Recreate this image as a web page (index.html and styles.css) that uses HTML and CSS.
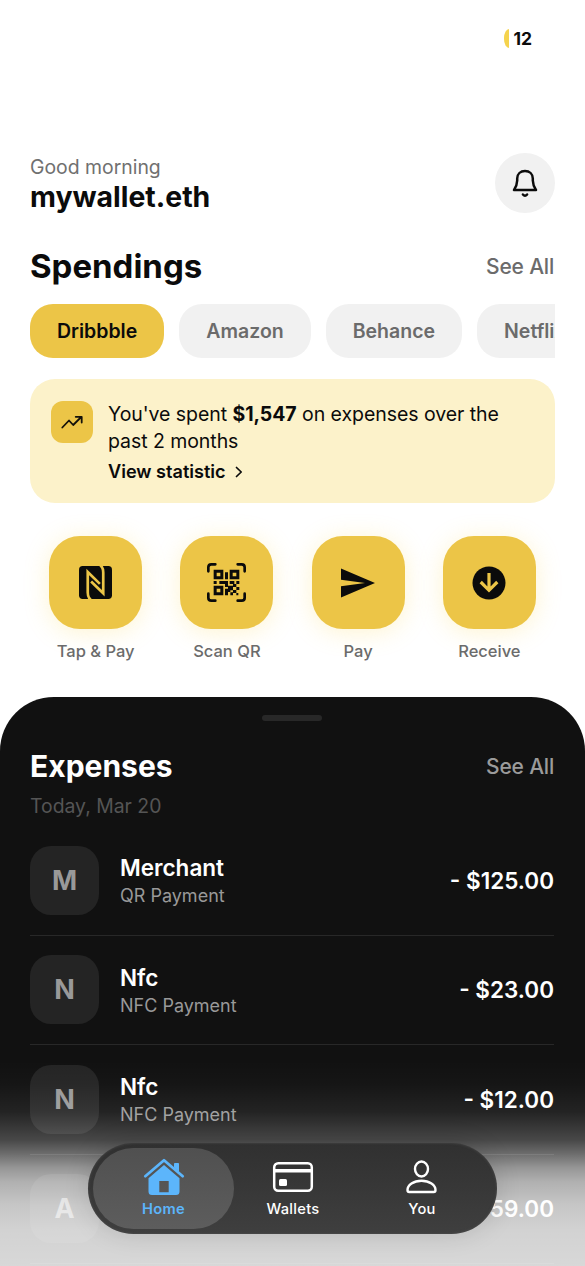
FILE: index.html
```html
<!DOCTYPE html>
<html lang="en">
<head>
<meta charset="utf-8">
<title>Wallet</title>
<link rel="stylesheet" href="styles.css">
</head>
<body>
<div class="app">
  <div class="status"><span class="status-mark"></span><span>12</span></div>

  <header class="header">
    <div>
      <div class="greeting">Good morning</div>
      <div class="account">mywallet.eth</div>
    </div>
    <div class="bell">
      <svg width="30" height="30" viewBox="0 0 30 30" fill="none" stroke="#0b0b0b" stroke-width="2.500" stroke-linejoin="round" stroke-linecap="round"><path d="M4 22H26C23.800 19 23 17.500 22.800 12.500V10.500C22.800 6 19.500 3 15 3S7.200 6 7.200 10.500V12.500C7 17.500 6.200 19 4 22Z"/><path d="M12.900 26.500Q15 28.900 17.100 26.500"/></svg>
    </div>
  </header>

  <div class="section-head">
    <h1 class="title">Spendings</h1>
    <span class="see-all">See All</span>
  </div>

  <div class="chips">
    <span class="chip chip-active">Dribbble</span>
    <span class="chip">Amazon</span>
    <span class="chip">Behance</span>
    <span class="chip">Netflix</span>
  </div>

  <section class="insight">
    <div class="insight-icon">
      <svg width="24" height="24" viewBox="0 0 24 24" fill="none" stroke="#14120a" stroke-width="1.800" stroke-linecap="round" stroke-linejoin="round"><path d="M2.300 17.500L9 10.500L13.200 15L21.200 7M15.700 6.800H21.700V12.500"/></svg>
    </div>
    <div>
      <p class="insight-text">You've spent <b>$1,547</b> on expenses over the past 2 months</p>
      <div class="insight-link">View statistic
        <svg width="8" height="12" viewBox="0 0 8 12" fill="none" stroke="#0b0b0b" stroke-width="1.700" stroke-linecap="round" stroke-linejoin="round"><path d="M1.500 1.500L6.200 6L1.500 10.500"/></svg>
      </div>
    </div>
  </section>

  <section class="actions">
    <div class="action">
      <div class="tile">
        <svg width="33" height="33" viewBox="0 0 98 98"><rect width="98" height="98" rx="11" fill="#0b0b0b"/><g fill="none" stroke="#ecc547" stroke-width="8"><path d="M35 100Q26 94 26 79V18L62 53"/><path d="M63 -2Q72 4 72 19V81L36 46"/></g></svg>
      </div>
      <span class="action-label">Tap &amp; Pay</span>
    </div>
    <div class="action">
      <div class="tile">
        <svg width="39" height="39" viewBox="0 0 117 117"><g fill="none" stroke="#0b0b0b" stroke-width="8"><path stroke-linecap="round" d="M4 25V13Q4 4 13 4H25M92 4H104Q113 4 113 13V25M113 92V104Q113 113 104 113H92M25 113H13Q4 113 4 104V92"/><path stroke-width="9" d="M24.500 24.500H44.500V44.500H24.500ZM72.500 24.500H92.500V44.500H72.500ZM24.500 72.500H44.500V92.500H24.500Z"/></g><path fill="#0b0b0b" d="M54 28H63V49H54ZM20 54H29V63H20ZM37 54H63V72H54V63H37ZM68 54H82V63H68ZM88 54H97V63H88ZM78 63H88V72H78ZM54 77H63V68H78V77H70V87H63V97H54ZM88 72H97V81H88ZM78 81H88V90H78ZM70 88H78V97H70ZM88 90H94V97H88ZM70 77H78V82H70Z"/></svg>
      </div>
      <span class="action-label">Scan QR</span>
    </div>
    <div class="action">
      <div class="tile">
        <svg class="send" width="34" height="30" viewBox="0 0 34 30" fill="#0b0b0b"><path d="M0 .5L34 15L0 29.500V18.200L24 15L0 11.800Z"/></svg>
      </div>
      <span class="action-label">Pay</span>
    </div>
    <div class="action">
      <div class="tile">
        <svg width="34" height="34" viewBox="0 0 34 34"><circle cx="17" cy="17" r="16.500" fill="#0b0b0b"/><path d="M17 7V24M8.700 16L17 24.300L25.300 16" fill="none" stroke="#ecc547" stroke-width="3.200"/></svg>
      </div>
      <span class="action-label">Receive</span>
    </div>
  </section>

  <section class="sheet">
    <div class="handle"></div>
    <div class="sheet-head">
      <h2 class="sheet-title">Expenses</h2>
      <span class="see-all sheet-see-all">See All</span>
    </div>
    <div class="date">Today, Mar 20</div>
    <div class="row">
      <div class="avatar">M</div>
      <div class="row-main"><div class="row-name">Merchant</div><div class="row-type">QR Payment</div></div>
      <div class="amount">- $125.00</div>
    </div>
    <div class="row">
      <div class="avatar">N</div>
      <div class="row-main"><div class="row-name">Nfc</div><div class="row-type">NFC Payment</div></div>
      <div class="amount">- $23.00</div>
    </div>
    <div class="row">
      <div class="avatar">N</div>
      <div class="row-main"><div class="row-name">Nfc</div><div class="row-type">NFC Payment</div></div>
      <div class="amount">- $12.00</div>
    </div>
    <div class="row">
      <div class="avatar">A</div>
      <div class="row-main"></div>
      <div class="amount">- $59.00</div>
    </div>
  </section>

  <div class="fade"></div>

  <nav class="tabs">
    <div class="tab tab-active">
      <svg width="42" height="37" viewBox="0 0 42 37"><path d="M2.300 18.200L21 2.200L39.700 18.200" fill="none" stroke="#5cb5fb" stroke-width="2.800" stroke-linecap="round" stroke-linejoin="round"/><path d="M31.500 9.500V5.500H35.500V13Z" fill="#5cb5fb" stroke="#5cb5fb" stroke-linejoin="round"/><path fill="#5cb5fb" fill-rule="evenodd" d="M21 7L36.500 20.300V33.500Q36.500 37 33 37H9Q5.500 37 5.500 33.500V20.300ZM16.300 23V34.200H25.700V23Z"/></svg>
      <span>Home</span>
    </div>
    <div class="tab">
      <svg width="42" height="37" viewBox="0 0 42 37"><rect x="2.200" y="5.200" width="37.600" height="27.600" rx="4" fill="none" stroke="#fff" stroke-width="2.500"/><path d="M2 12.700H40" stroke="#fff" stroke-width="3.400"/><rect x="7" y="21" width="8" height="7" rx="1.500" fill="#fff"/></svg>
      <span>Wallets</span>
    </div>
    <div class="tab">
      <svg width="42" height="37" viewBox="0 0 42 37" fill="none" stroke="#fff" stroke-width="2.400"><ellipse cx="20.500" cy="11" rx="6.500" ry="7.500"/><path d="M8.300 34Q6.500 34 6.500 32C6.500 27 12.500 22.800 20.500 22.800S34.500 27 34.500 32Q34.500 34 32.700 34Z"/></svg>
      <span>You</span>
    </div>
  </nav>
</div>
</body>
</html>
```
FILE: styles.css
```css
* { box-sizing: border-box; }
body {
  margin: 0;
  background: #fff;
  color: #0b0b0b;
  font-family: Inter, "Liberation Sans", sans-serif;
}
h1, h2, p { margin: 0; }
svg { display: block; flex: none; }
.app {
  position: relative;
  width: 585px;
  height: 1266px;
  overflow: hidden;
}
.status {
  display: flex;
  justify-content: flex-end;
  align-items: center;
  gap: 4px;
  height: 77px;
  padding-right: 53px;
  font-size: 17.5px;
  font-weight: 700;
}
.status-mark {
  width: 5px;
  height: 19px;
  border-radius: 5px 0 0 5px / 9px 0 0 9px;
  background: #f5d34d;
}
.header {
  display: flex;
  justify-content: space-between;
  align-items: center;
  height: 60px;
  margin: 76px 30px 0;
}
.greeting {
  color: #707070;
  font-size: 19.4px;
  line-height: 27px;
}
.account {
  font-size: 28.4px;
  font-weight: 700;
  line-height: 32px;
}
.bell {
  display: flex;
  align-items: center;
  justify-content: center;
  width: 60px;
  height: 60px;
  border-radius: 50%;
  background: #f1f1f1;
}
.section-head, .sheet-head {
  display: flex;
  justify-content: space-between;
  align-items: center;
}
.section-head { height: 42px; margin: 32px 31px 0 30px; }
.title { font-size: 33px; font-weight: 700; }
.see-all { color: #6b6b6b; font-size: 21px; font-weight: 500; letter-spacing: -.2px; }
.chips {
  display: flex;
  gap: 15px;
  margin: 17px 30px 0;
  overflow: hidden;
}
.chip {
  flex: none;
  height: 54px;
  padding: 0 27px;
  border-radius: 23px;
  background: #f1f1f1;
  color: #6b6b6b;
  font-size: 19.5px;
  font-weight: 600;
  line-height: 54px;
}
.chip-active { background: #ecc547; color: #0b0b0b; }
.insight {
  display: flex;
  gap: 15px;
  height: 124px;
  margin: 21px 30px 0;
  padding: 22px 21px 0;
  border-radius: 25px;
  background: #fcf2ca;
}
.insight-icon {
  display: flex;
  align-items: center;
  justify-content: center;
  flex: none;
  width: 42px;
  height: 42px;
  border-radius: 12px;
  background: #ecc547;
}
.insight-text { font-size: 19.5px; line-height: 27px; letter-spacing: -.06px; }
.insight-link {
  display: flex;
  align-items: center;
  gap: 9px;
  margin-top: 3px;
  font-size: 18.1px;
  font-weight: 600;
  line-height: 27px;
}
.actions {
  display: grid;
  grid-template-columns: repeat(4, 1fr);
  margin: 33px 30px 0;
}
.action {
  display: flex;
  flex-direction: column;
  align-items: center;
  gap: 10px;
}
.tile {
  display: flex;
  align-items: center;
  justify-content: center;
  width: 93px;
  height: 93px;
  border-radius: 31px;
  background: #ecc547;
  box-shadow: 0 3px 24px rgba(250, 215, 80, .27);
}
.action-label { color: #6b6b6b; font-size: 16.5px; font-weight: 500; line-height: 24px; }
.sheet {
  height: 590px;
  margin-top: 34px;
  padding: 18px 31px 0 30px;
  border-radius: 54px 54px 0 0;
  background: #111;
  color: #fff;
}
.handle {
  width: 60px;
  height: 6px;
  margin: 0 auto;
  border-radius: 3px;
  background: #282828;
}
.sheet-head { height: 36px; margin-top: 27px; }
.sheet-title { font-size: 30px; font-weight: 700; }
.sheet-see-all { color: #9b9b9b; }
.date {
  margin-top: 7px;
  color: #555;
  font-size: 19.4px;
  line-height: 30px;
}
.row {
  display: flex;
  align-items: center;
  height: 109.5px;
  border-bottom: 1.5px solid #282828;
}
.date + .row { margin-top: 5px; }
.avatar {
  width: 69px;
  height: 69px;
  border-radius: 21px;
  background: #242424;
  color: #999;
  font-size: 27px;
  font-weight: 700;
  line-height: 70px;
  text-align: center;
}
.row-main { flex: 1; margin-left: 21px; padding-top: 2px; }
.row-name { font-size: 22.5px; font-weight: 600; line-height: 30px; }
.row-type { color: #999; font-size: 18px; line-height: 26px; }
.amount { font-size: 22.5px; font-weight: 600; }
.fade {
  position: absolute;
  inset: 1060px 0 0;
  background: linear-gradient(rgba(255,255,255,0) 0, rgba(255,255,255,.02) 24px, rgba(255,255,255,.08) 52px, rgba(255,255,255,.23) 80px, rgba(255,255,255,.39) 94px, rgba(255,255,255,.56) 108px, rgba(255,255,255,.67) 122px, rgba(255,255,255,.76) 145px, rgba(255,255,255,.81) 170px, rgba(255,255,255,.835) 206px);
}
.tabs {
  position: absolute;
  left: 88px;
  top: 1143px;
  display: grid;
  grid-template-columns: 141px 118px 140px;
  width: 409px;
  height: 91px;
  padding: 5px;
  border-radius: 46px;
  background: linear-gradient(#303030, #3f3f3f);
  box-shadow: 0 0 26px rgba(0, 0, 0, .13), inset 0 0 2px 1px rgba(85, 85, 85, .35);
  color: #fff;
  font-size: 14.7px;
  font-weight: 500;
}
.tab {
  display: flex;
  flex-direction: column;
  align-items: center;
  gap: 5px;
  padding-top: 10px;
  line-height: 18px;
  letter-spacing: .25px;
}
.tab-active {
  border-radius: 41px;
  background: linear-gradient(#505050, #5d5d5d);
  color: #5cb5fb;
  font-weight: 600;
}
```
